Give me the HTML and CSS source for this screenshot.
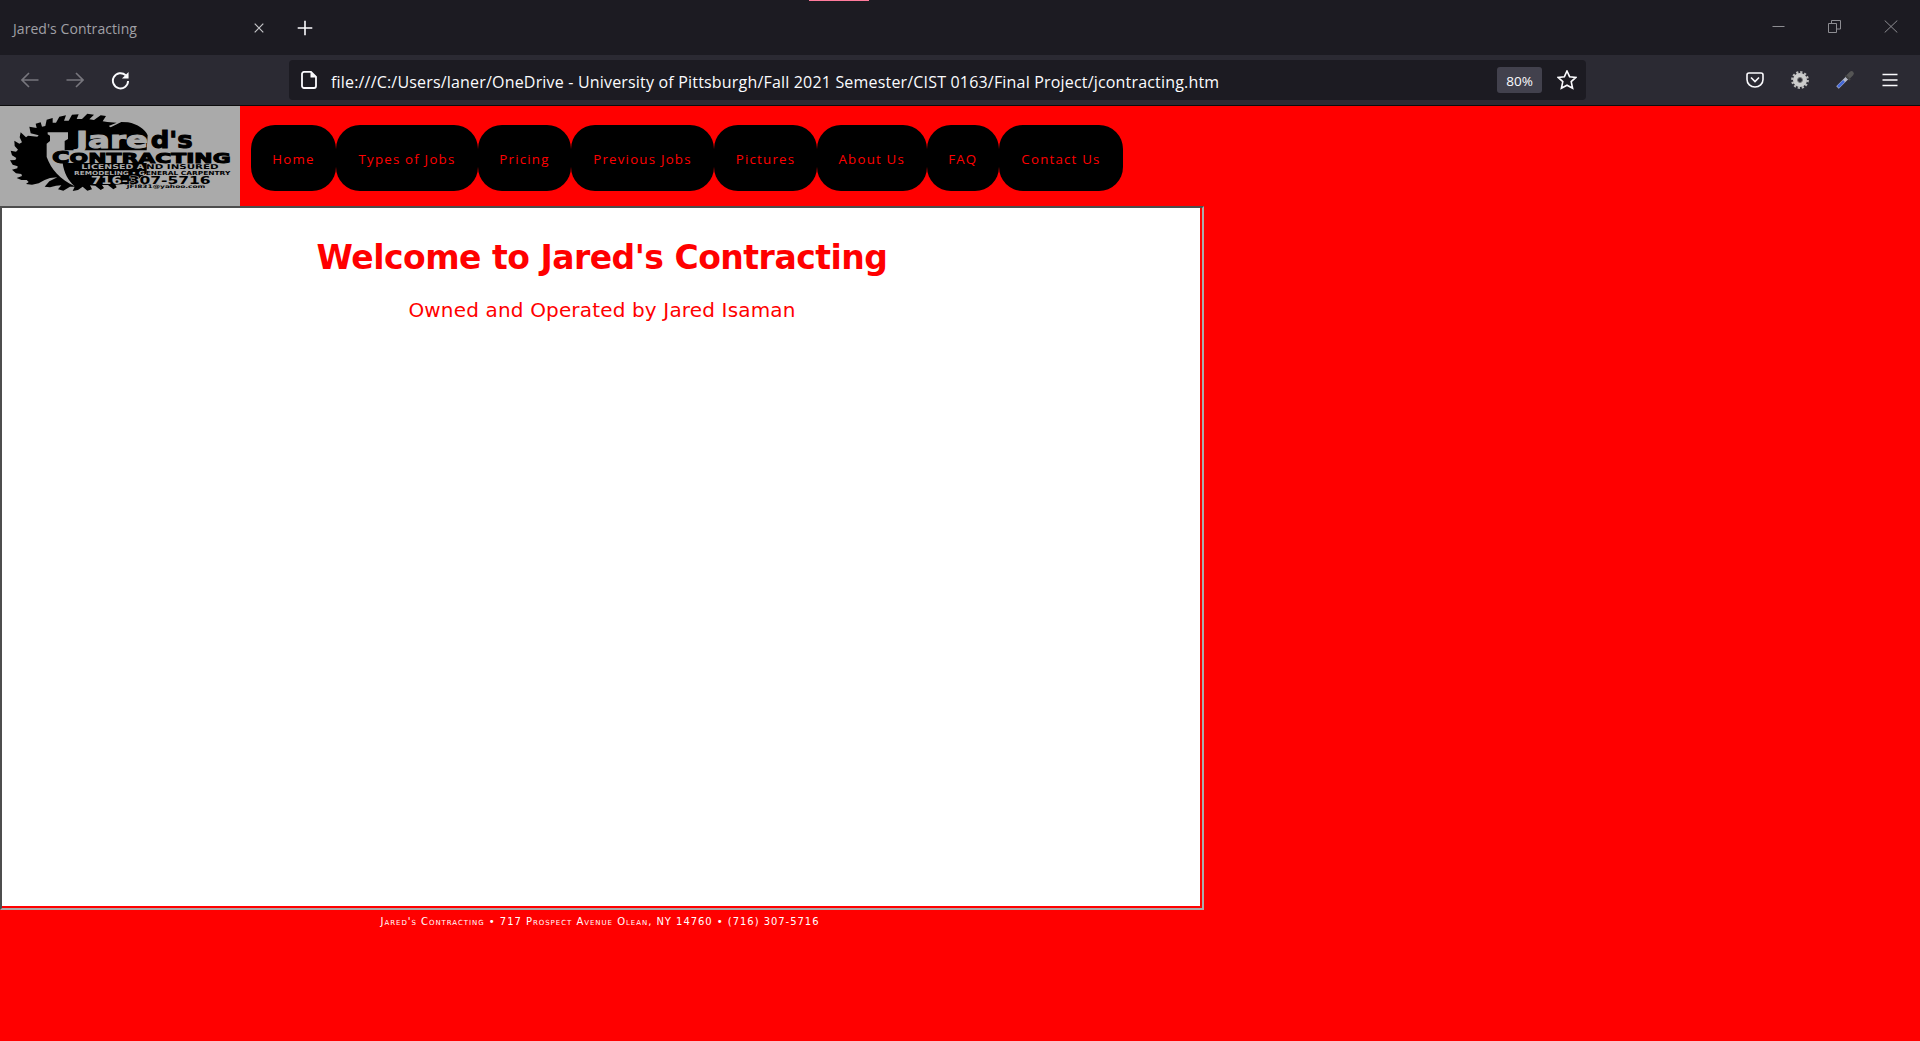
FILE: index.html
```html
<!DOCTYPE html>
<html lang="en">
<head>
<meta charset="utf-8">
<title>Jared's Contracting</title>
<link rel="stylesheet" href="styles.css">
</head>
<body>
<header class="tabbar">
  <div class="accent"></div>
  <span class="tab-title">Jared's Contracting</span>
  <svg class="tab-close" width="10" height="10" viewBox="0 0 10 10"><path d="M.7.7l8.6 8.6M9.3.7L.7 9.3"/></svg>
  <svg class="tab-new" width="16" height="16" viewBox="0 0 16 16"><path d="M8 .7v14.6M.7 8h14.6"/></svg>
  <div class="window-buttons">
    <svg width="13" height="13" viewBox="0 0 13 13"><path d="M.5 6.5h12"/></svg>
    <svg width="13" height="13" viewBox="0 0 13 13"><path d="M.5 3.5h8v9h-8zM3.500 3.500v-3h9v8.500h-4"/></svg>
    <svg width="14" height="13" viewBox="0 0 14 13"><path d="M.7.5l12.600 12M13.300.5L.7 12.500"/></svg>
  </div>
</header>
<div class="toolbar">
  <div class="nav-buttons">
    <svg class="dim" width="18" height="16" viewBox="0 0 18 16"><path d="M17.500 8H1M8 1L1 8l7 7"/></svg>
    <svg class="dim" width="18" height="16" viewBox="0 0 18 16"><path d="M.5 8H17M10 1l7 7-7 7"/></svg>
    <svg class="reload" width="19" height="19" viewBox="0 0 20 20"><path d="M18 10.500A8 8 0 1 1 15.500 4.500"/><path class="solid" d="M18.500 1v7h-7z"/></svg>
  </div>
  <div class="urlbar">
    <svg class="page-icon" width="16" height="18" viewBox="0 0 16 18"><path d="M3 .9h7l5 5V15a2 2 0 0 1-2 2H3a2 2 0 0 1-2-2V3A2 2 0 0 1 3 .9z"/><path class="solid" d="M9.500 1v5.500H15z"/></svg>
    <span class="url">file:///C:/Users/laner/OneDrive - University of Pittsburgh/Fall 2021 Semester/CIST 0163/Final Project/jcontracting.htm</span>
    <span class="zoom">80%</span>
    <svg class="star" width="20" height="20" viewBox="0 0 20 20"><path d="M10 1l2.600 5.700 6.300.7-4.700 4.200 1.400 6.700L10 15.200l-5.600 3.100 1.400-6.700L1.100 7.400l6.300-.7z"/></svg>
  </div>
  <div class="extensions">
    <svg width="18" height="16" viewBox="0 0 18 16"><path d="M3 1h12a2 2 0 0 1 2 2v4.500a8 7.500 0 0 1-16 0V3a2 2 0 0 1 2-2z"/><path d="M5 5.500l4 4 4-4"/></svg>
    <svg class="gear" width="18" height="18" viewBox="0 0 18 18"><circle class="teeth" cx="9" cy="9" r="7.700"/><circle class="ring" cx="9" cy="9" r="4.700"/><circle class="hub" cx="9" cy="9" r="2.500"/></svg>
    <svg class="dropper" width="20" height="20" viewBox="0 0 20 20"><path class="glass" d="M2.500 17.500L12 8"/><path class="ink" d="M3 17L9 11"/><path class="bulb" d="M13.500 6.500l3-3"/><path class="collar" d="M10.500 5.500l4.500 4.500"/></svg>
    <svg width="16" height="14" viewBox="0 0 16 14"><path d="M.5 1.500h15M.5 7h15M.5 12.500h15"/></svg>
  </div>
</div>
<main class="page">
  <div class="masthead">
    <svg class="logo" width="240" height="100" viewBox="0 18 720 300" preserveAspectRatio="none">
      <!-- saw blade -->
      <path class="ink" d="M443 106C436 88 412 72 384 67L364 66 332 82 326 78 350 68 322 66 308 64 318 48 302 46 282 60 268 58 282 44 262 41 246 57 230 57 236 43 216 44 206 62 192 62 198 46 178 50 168 68 158 68 158 54 140 59 136 78 126 80 122 67 107 71 110 84 88 80 92 100 116 106 112 110 84 107 78 112 62 97 59 112 66 127 58 131 43 122 44 138 54 149 48 155 32 152 36 166 49 174 46 180 30 181 38 194 53 199 52 205 36 209 48 220 64 222 66 228 50 234 64 240 80 240 86 246 78 252 96 254 116 250 134 240 150 234 172 232 148 244 134 260 150 262 168 257 184 256 174 268 190 272 210 260 224 260 218 273 234 270 248 260 262 272 276 268 270 256 286 257 302 270 312 264 306 255 324 255 340 268 350 262 346 254 372 252 388 256 440 220V150z"/>
      <!-- nail and the band behind the name -->
      <path class="cut" d="M143 97h61v20l-10 6v28h250v38H188c4 30 16 52 36 70-44-22-70-50-84-88v-40l10-8v-16l-7-4z"/>
      <g class="lettering">
        <text class="light heavy" x="228" y="145" font-size="70" textLength="216" lengthAdjust="spacingAndGlyphs">Jare</text>
        <text class="dark heavy" x="452" y="145" font-size="70" textLength="126" lengthAdjust="spacingAndGlyphs">d's</text>
        <text class="dark bold" x="156" y="188" font-size="48" textLength="536" lengthAdjust="spacingAndGlyphs">C<tspan font-size="44">ONTRACTING</tspan></text>
        <text class="light" x="244" y="208" font-size="20" textLength="188" lengthAdjust="spacingAndGlyphs">LICENSED A</text>
        <text class="dark" x="438" y="208" font-size="20" textLength="218" lengthAdjust="spacingAndGlyphs">ND INSURED</text>
        <text class="light" x="222" y="226" font-size="17" textLength="212" lengthAdjust="spacingAndGlyphs">REMODELING • G</text>
        <text class="dark" x="437" y="226" font-size="17" textLength="254" lengthAdjust="spacingAndGlyphs">ENERAL CARPENTRY</text>
        <text class="light" x="272" y="251" font-size="29" textLength="112" lengthAdjust="spacingAndGlyphs">716-</text>
        <text class="dark edged" x="386" y="251" font-size="29" textLength="246" lengthAdjust="spacingAndGlyphs">307-5716</text>
        <text class="dark edged" x="380" y="264" font-size="14" textLength="236" lengthAdjust="spacingAndGlyphs">JFI831@yahoo.com</text>
      </g>
    </svg>
    <nav class="menu">
      <a>Home</a><a>Types of Jobs</a><a>Pricing</a><a>Previous Jobs</a><a>Pictures</a><a>About Us</a><a>FAQ</a><a>Contact Us</a>
    </nav>
  </div>
  <section class="frame">
    <div class="content">
      <h1>Welcome to Jared's Contracting</h1>
      <p>Owned and Operated by Jared Isaman</p>
    </div>
  </section>
  <footer>Jared's Contracting • 717 Prospect Avenue Olean, NY 14760 • (716) 307-5716</footer>
</main>
</body>
</html>
```
FILE: styles.css
```css
* { box-sizing: border-box; }
body { margin: 0; height: 1041px; overflow: hidden; background: #f00; font-family: "Open Sans", sans-serif; }
svg { display: block; flex: none; fill: none; stroke: #fbfbfe; stroke-width: 1.6; }

.tabbar { position: relative; display: flex; align-items: center; height: 55px; padding: 0 22px 0 13px; background: #1c1b22; }
.accent { position: absolute; left: 809px; top: 0; width: 60px; height: 1px; background: #ff7b9c; }
.tab-title { width: 241px; color: #a0a0a6; font-size: 14px; letter-spacing: 0.06px; white-space: nowrap; padding-top: 2px; }
.tab-close { stroke: #c4c4c8; stroke-width: 1.2; }
.tab-new { margin-left: 33px; }
.window-buttons { display: flex; align-items: center; gap: 43px; margin-left: auto; padding-bottom: 2px; }
.window-buttons svg { stroke: #8d8d92; stroke-width: 1; }

.toolbar { display: flex; align-items: center; height: 51px; background: #2b2a33; border-bottom: 1px solid #0c0c0d; }
.nav-buttons { display: flex; align-items: center; gap: 27px; width: 289px; padding-left: 21px; }
.dim { stroke: #77767d; }
.reload { stroke-width: 2; }
.solid { fill: #fbfbfe; stroke: none; }
.urlbar { display: flex; align-items: center; width: 1297px; height: 40px; padding: 0 9px 0 12px; border-radius: 4px; background: #1c1b22; }
.url { margin-left: 14px; color: #fbfbfe; font-size: 16px; letter-spacing: 0.183px; white-space: nowrap; padding-top: 3px; }
.page-icon { stroke-width: 1.8; }
.zoom { width: 45px; height: 26px; margin-left: auto; border-radius: 3px; background: #42414d; color: #fbfbfe; font-size: 13.500px; line-height: 28px; text-align: center; }
.star { margin-left: 15px; }
.extensions { display: grid; grid-template-columns: repeat(4, 45px); align-items: center; justify-items: center; margin-left: auto; padding-right: 8px; }
.gear .teeth { stroke: #bbb; stroke-width: 2.4; stroke-dasharray: 2.2 1.83; }
.gear .ring { stroke: #ccc; stroke-width: 4.6; }
.gear .hub { stroke: #777; stroke-width: 1; }
.dropper .glass { stroke: #b4b8c8; stroke-width: 3.6; }
.dropper .ink { stroke: #4468d8; stroke-width: 2.6; }
.dropper .bulb { stroke: #555; stroke-width: 4.6; stroke-linecap: round; }
.dropper .collar { stroke: #444; stroke-width: 2; }

.masthead { display: flex; height: 100px; }
.logo { background: #aaa; stroke: none; }
.logo .ink { fill: #000; }
.logo .cut { fill: #aaa; }
.lettering { font-family: "DejaVu Sans", sans-serif; font-weight: bold; }
.light { fill: #aaa; }
.light.heavy { stroke: #aaa; stroke-width: 3; }
.dark { fill: #000; }
.dark.heavy, .dark.bold { stroke: #000; stroke-width: 3; }
.dark.edged { stroke: #aaa; stroke-width: 3; paint-order: stroke; }
.menu { display: grid; grid-template-columns: 85px 142px 93px 143px 103px 109.500px 72.500px 124px; grid-template-rows: 66px; height: 66px; margin: 19px 0 0 11px; }
.menu a { padding-top: 2px; border-radius: 24px; background: #000; color: #f00; font-size: 13.300px; letter-spacing: 1.2px; line-height: 64px; text-align: center; white-space: nowrap; }

.frame { width: 1204px; height: 704px; border: 2px solid; border-color: #4d4d4d #aaa #aaa #4d4d4d; }
.content { height: 700px; padding-left: 2px; border: solid #f00; border-width: 0 2px 2px 0; background: #fff; color: #f00; text-align: center; font-family: "DejaVu Sans", sans-serif; }
h1 { margin: 0; padding-top: 29px; font-size: 33px; letter-spacing: -0.5px; line-height: 42px; }
.content p { margin: 0; padding-top: 18px; font-size: 20px; letter-spacing: 0.16px; line-height: 26px; }
footer { width: 1200px; padding-top: 4px; color: #fff; font-family: "DejaVu Sans", sans-serif; font-size: 10px; letter-spacing: 0.96px; line-height: 15px; font-variant: small-caps; text-align: center; }
```
